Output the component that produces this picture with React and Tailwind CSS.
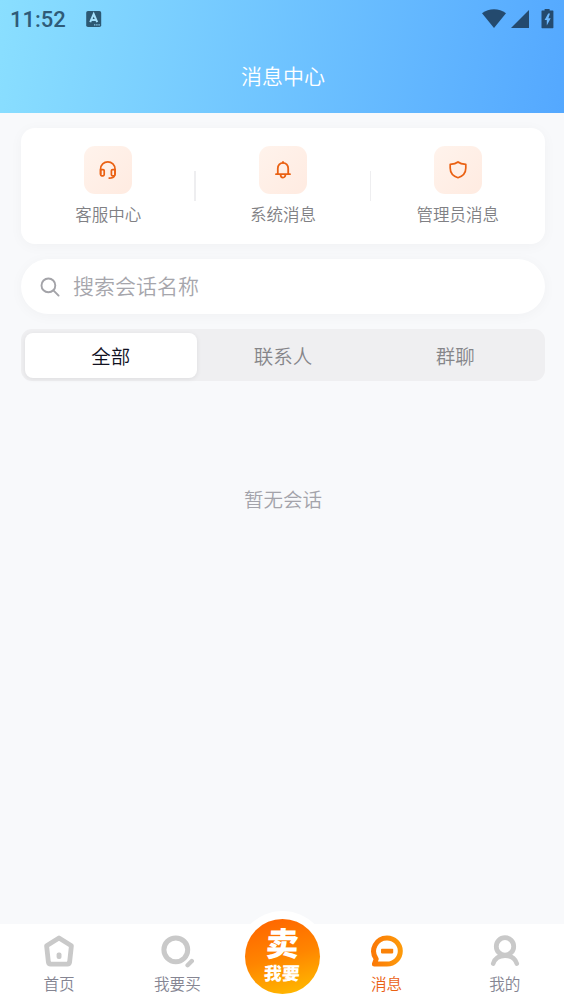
import { useState } from 'react'

const SHORTCUTS = [
  { label: '客服中心', icon: HeadsetIcon },
  { label: '系统消息', icon: BellIcon },
  { label: '管理员消息', icon: ShieldIcon },
]

const TABS = ['全部', '联系人', '群聊']

function HeadsetIcon() {
  return (
    <svg width="20" height="20" viewBox="0 0 20 20" fill="none" stroke="#ea6113" strokeWidth="1.7" strokeLinecap="round" strokeLinejoin="round">
      <path d="M2.600 14V9a7.200 7.200 0 0 1 14.400 0v5" />
      <path d="M2.600 9.600H5a1.200 1.200 0 0 1 1.200 1.200v3.800A1.200 1.200 0 0 1 5 15.800H3.800a1.200 1.200 0 0 1-1.200-1.200z" />
      <path d="M17 9.600h-2.400a1.200 1.200 0 0 0-1.200 1.200v3.800a1.200 1.200 0 0 0 1.200 1.200h1.200a1.200 1.200 0 0 0 1.200-1.200z" />
      <path d="M16.600 15.400c-.6 1.800-2.200 2.700-5.400 2.700" />
    </svg>
  )
}

function BellIcon() {
  return (
    <svg width="20" height="20" viewBox="0 0 20 20" fill="none" stroke="#ea6113" strokeWidth="1.8" strokeLinecap="round" strokeLinejoin="round">
      <path d="M4.800 14V8.400a5.200 5.600 0 0 1 10.400 0V14" />
      <path d="M3 14.200h14M10 1.900v1" />
      <path d="M7.600 14.800a2.400 2.800 0 0 0 4.800 0" />
    </svg>
  )
}

function ShieldIcon() {
  return (
    <svg width="20" height="20" viewBox="0 0 20 20" fill="none" stroke="#ea6113" strokeWidth="1.7" strokeLinejoin="round">
      <path d="M10 2C8.400 3.300 5.400 4.200 2.200 4.400V8c0 5 3 8.200 7.800 9.700 4.800-1.500 7.800-4.700 7.800-9.700V4.400C14.600 4.200 11.600 3.300 10 2z" />
    </svg>
  )
}

function HomeIcon() {
  return (
    <svg width="34" height="34" viewBox="0 0 34 34" fill="none">
      <path d="M17 4 29.400 11.800 27.600 28.200Q27.300 30.200 25.400 30.200H8.600Q6.700 30.200 6.400 28.200L4.600 11.800z" stroke="#c9c9c9" strokeWidth="4.800" strokeLinejoin="round" />
      <rect x="14.600" y="18.500" width="4.900" height="6.600" rx="2" fill="#c9c9c9" />
    </svg>
  )
}

function BuyIcon() {
  return (
    <svg width="34" height="34" viewBox="0 0 34 34" fill="none" stroke="#c9c9c9">
      <circle cx="15.800" cy="15.800" r="11.900" strokeWidth="5" />
      <path d="M27.600 31.200 31.800 27" strokeWidth="4.400" strokeLinecap="round" />
    </svg>
  )
}

function MessageIcon() {
  return (
    <svg width="34" height="34" viewBox="0 0 34 34" fill="none">
      <defs>
        <linearGradient id="msg" x1="0" y1="0" x2="1" y2="0">
          <stop offset="0" stopColor="#fb7a07" />
          <stop offset="1" stopColor="#fd990a" />
        </linearGradient>
      </defs>
      <path d="M17 3.900a13.300 13.100 0 1 1 0 26.200H4.400L6.200 25A13.300 13.300 0 0 1 17 3.900z" stroke="url(#msg)" strokeWidth="5" strokeLinejoin="round" />
      <rect x="11" y="14.800" width="12.200" height="4.600" rx="0.800" fill="#fa8208" />
    </svg>
  )
}

function MineIcon() {
  return (
    <svg width="34" height="34" viewBox="0 0 34 34" fill="none" stroke="#c9c9c9" strokeLinecap="round">
      <circle cx="17" cy="12.400" r="8.700" strokeWidth="4.800" />
      <path d="M5.200 29.600C6.800 24.600 11 21.600 17 21.600s10.200 3 11.800 8" strokeWidth="4.600" />
    </svg>
  )
}

function StatusBar() {
  return (
    <div className="flex h-[38px] items-center px-[10px]">
      <span className="mt-[2px] w-[56px] text-[22px] leading-[38px] font-medium text-[#2f5b78] font-[Roboto,sans-serif]">11:52</span>
      <svg className="ml-[20px]" width="16" height="18" viewBox="0 0 16 18">
        <rect x="0.200" y="1" width="15" height="16" rx="1.800" fill="#2c5873" />
        <path d="M4.200 12.200 7.700 4l3.500 8.200M5.400 9.900h4.600" fill="none" stroke="#a5e0fb" strokeWidth="2" />
        <path d="M8 14.800h6" stroke="#8cc8e8" strokeWidth="1.200" strokeDasharray="1.400 0.800" />
      </svg>
      <div className="-mt-px ml-auto flex items-center">
        <svg width="24" height="20" viewBox="0 0 24 20">
          <path d="M0 4.200C7 -1 17 -1 24 4.200L12 19z" fill="#244a6e" />
        </svg>
        <svg className="ml-[5px]" width="19" height="20" viewBox="0 0 19 20">
          <path d="M18 1v18H0z" fill="#244a6e" />
        </svg>
        <svg className="ml-[11px]" width="13" height="20" viewBox="0 0 13 20">
          <path d="M3.600 0h5v1.500h3.200q.6 0 .6.600V18.600q0 .6-.6.600H1.100q-.6 0-.6-.6V2.100q0-.6.600-.6H3.600z" fill="#244a6e" />
          <path d="M7.200 4.500 3.600 11h2.200v5.600l3.900-7.400H7.400L9 4.500z" fill="#6bb8ff" />
        </svg>
      </div>
    </div>
  )
}

function NavItem({ label, icon: Icon, active }) {
  return (
    <button className="flex flex-1 flex-col items-center pt-[10px]">
      <Icon />
      <span className={`mt-[3px] text-[15.600px] leading-[24px] ${active ? 'text-[#ea6113]' : 'text-[#858592]'}`}>{label}</span>
    </button>
  )
}

export default function App() {
  const [tab, setTab] = useState('全部')

  return (
    <div className="flex h-[1002px] w-[564px] flex-col overflow-hidden bg-[#f8f9fb] font-[350] font-['Noto_Sans_CJK_SC',sans-serif]">
      {/* 顶部标题 */}
      <header className="h-[113px] shrink-0 bg-[linear-gradient(100deg,#8adfff_0%,#54a8ff_100%)]">
        <StatusBar />
        <h1 className="pl-[2px] text-center text-[21px] leading-[75px] font-[350] text-white">消息中心</h1>
      </header>

      <main className="flex flex-1 flex-col pt-[15px] pr-[19px] pl-[21px]">
        {/* 快捷入口 */}
        <section className="flex h-[116px] items-center rounded-[14px] bg-white shadow-[0_2px_14px_rgba(0,0,0,0.035)]">
          {SHORTCUTS.map(({ label, icon: Icon }, i) => (
            <div key={label} className={`flex flex-1 items-center ${i ? 'relative' : ''}`}>
              {i > 0 && <span className={`absolute h-[30px] bg-[#eeeef0] ${i === 1 ? '-left-[1.700px] w-[2px]' : 'left-0 w-px'}`} />}
              <div className="flex flex-1 flex-col items-center">
                <div className="flex size-[48px] items-center justify-center rounded-[11px] bg-gradient-to-br from-[#fff3ec] to-[#ffebe1]">
                  <Icon />
                </div>
                <span className="mt-[8px] text-[16.500px] leading-[24px] text-[#808084]">{label}</span>
              </div>
            </div>
          ))}
        </section>

        {/* 搜索 */}
        <label className="mt-[15px] flex h-[55px] items-center rounded-full bg-white pl-[19px] shadow-[0_2px_14px_rgba(0,0,0,0.035)]">
          <svg width="20" height="20" viewBox="0 0 20 20" fill="none" stroke="#a3a3a8" strokeWidth="1.900" strokeLinecap="round">
            <circle cx="8.400" cy="8.400" r="6.900" />
            <path d="m13.400 13.400 5.200 5.200" />
          </svg>
          <input
            type="text"
            placeholder="搜索会话名称"
            className="ml-[13px] flex-1 pb-[2px] text-[21px] placeholder-[#a6a6ac] outline-none"
          />
        </label>

        {/* 会话分类 */}
        <div className="mt-[15px] flex h-[52px] rounded-[11px] bg-[#efeff1] p-[3.500px]">
          {TABS.map((t) => (
            <button
              key={t}
              onClick={() => setTab(t)}
              className={`flex-1 rounded-[8px] pt-px text-[19.500px] ${tab === t ? 'bg-white text-[#12121f] shadow-[0_1px_5px_rgba(0,0,0,0.08)]' : 'text-[#858589]'}`}
            >
              {t}
            </button>
          ))}
        </div>

        <p className="mt-[103px] text-center text-[19.500px] leading-[30px] text-[#a3a3aa]">暂无会话</p>
      </main>

      {/* 底部导航 */}
      <nav className="flex h-[78px] shrink-0 items-start bg-white">
        <NavItem label="首页" icon={HomeIcon} />
        <NavItem label="我要买" icon={BuyIcon} />
        <button className="-mt-[13px] flex size-[91px] shrink-0 items-center justify-center rounded-full bg-white">
          <span className="flex size-[75px] flex-col items-center rounded-full bg-[linear-gradient(165deg,#ff6500_5%,#ff8500_50%,#ffc000_100%)] font-black text-white">
            <span className="mt-[7px] -skew-x-3 text-[33px] leading-[33px]">卖</span>
            <span className="mt-[4px] -skew-x-3 text-[18px] leading-[18px]">我要</span>
          </span>
        </button>
        <NavItem label="消息" icon={MessageIcon} active />
        <NavItem label="我的" icon={MineIcon} />
      </nav>
    </div>
  )
}
